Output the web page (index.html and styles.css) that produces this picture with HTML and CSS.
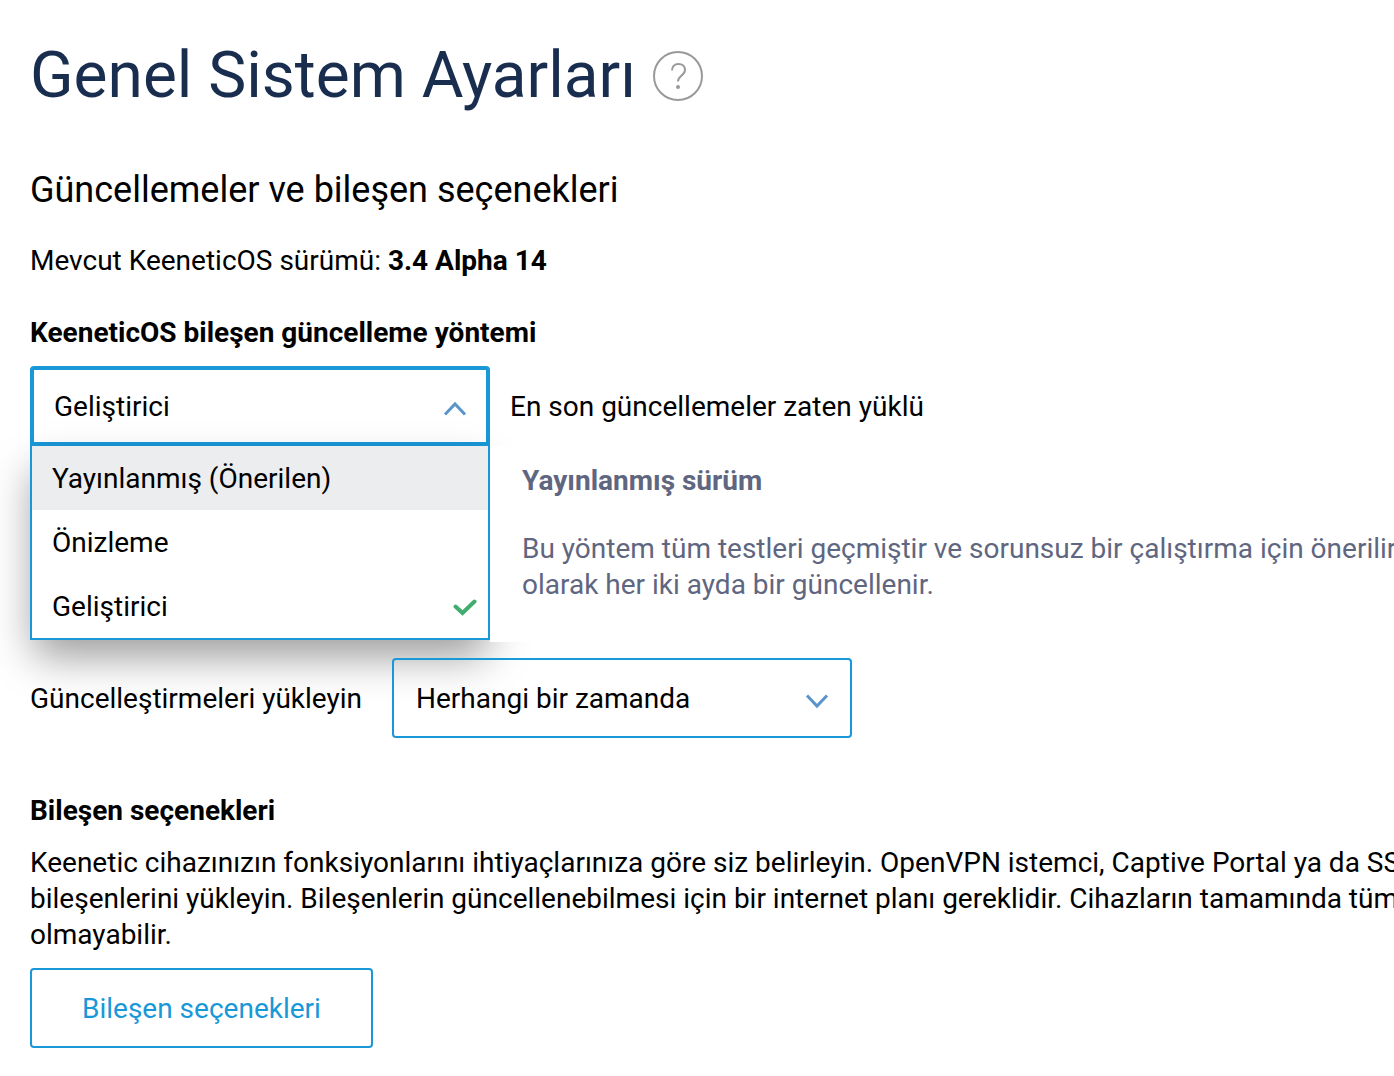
FILE: index.html
```html
<!DOCTYPE html>
<html lang="tr">
<head>
  <meta charset="UTF-8" />
  <meta name="viewport" content="width=device-width, initial-scale=1.0"/>
  <title>Genel Sistem Ayarları</title>
  <link rel="stylesheet" href="styles.css">
</head>
<body>
  <main class="page">
    <header class="page-header">
      <h1>Genel Sistem Ayarları</h1>
      <button type="button" class="help-btn">
        <svg width="50" height="50" viewBox="0 0 50 50" fill="none" stroke="#999" aria-hidden="true">
          <circle cx="25" cy="25" r="24" stroke-width="2"/>
          <path d="M19 19.500c0-4 2.600-6.500 6.500-6.500s6.500 2.300 6.500 6c0 5.500-7 5.500-7 11.500" stroke-width="2"/>
          <circle cx="25" cy="36" r="2" fill="#999" stroke="none"/>
        </svg>
      </button>
    </header>

    <section class="updates">
      <h2>Güncellemeler ve bileşen seçenekleri</h2>
      <p class="version">Mevcut KeeneticOS sürümü: <strong>3.4 Alpha 14</strong></p>

      <label class="field-title" for="channel">KeeneticOS bileşen güncelleme yöntemi</label>
      <div class="field-row">
        <div class="select open">
          <select id="channel">
            <option>Yayınlanmış (Önerilen)</option>
            <option>Önizleme</option>
            <option selected>Geliştirici</option>
          </select>
          <svg class="arrow" width="24" height="16" viewBox="0 0 24 16" aria-hidden="true">
            <path d="M2 13.500L12 3l10 10.500"/>
          </svg>
          <ul class="menu" role="listbox">
            <li class="menu-item hover" role="option">Yayınlanmış (Önerilen)</li>
            <li class="menu-item" role="option">Önizleme</li>
            <li class="menu-item" role="option" aria-selected="true">
              Geliştirici
              <svg class="check" width="24" height="18" viewBox="0 0 24 18" aria-hidden="true">
                <path d="M2.500 8.500l7 6.500L21.500 3.500"/>
              </svg>
            </li>
          </ul>
        </div>
        <span>En son güncellemeler zaten yüklü</span>
      </div>

      <!-- description of the hovered channel -->
      <div class="channel-info">
        <h3>Yayınlanmış sürüm</h3>
        <p>Bu yöntem tüm testleri geçmiştir ve sorunsuz bir çalıştırma için önerilir<br>olarak her iki ayda bir güncellenir.</p>
      </div>

      <div class="field-row schedule">
        <label for="install-time">Güncelleştirmeleri yükleyin</label>
        <div class="select">
          <select id="install-time">
            <option>Herhangi bir zamanda</option>
          </select>
          <svg class="arrow" width="24" height="16" viewBox="0 0 24 16" aria-hidden="true">
            <path d="M2 2.500L12 13l10-10.500"/>
          </svg>
        </div>
      </div>
    </section>

    <section class="components">
      <h3>Bileşen seçenekleri</h3>
      <p>Keenetic cihazınızın fonksiyonlarını ihtiyaçlarınıza göre siz belirleyin. OpenVPN istemci, Captive Portal ya da SS<br>bileşenlerini yükleyin. Bileşenlerin güncellenebilmesi için bir internet planı gereklidir. Cihazların tamamında tüm<br>olmayabilir.</p>
      <button type="button" class="btn">Bileşen seçenekleri</button>
    </section>
  </main>
</body>
</html>
```

FILE: styles.css
```css
* {
  margin: 0;
  padding: 0;
  box-sizing: border-box;
}

body {
  font-family: Roboto, sans-serif;
  font-size: 28px;
  line-height: 36px;
  color: #000;
  background: #fff;
  overflow-x: hidden;
}

.page {
  padding: 38px 0 28px 30px;
  white-space: nowrap;
}

.page-header {
  display: flex;
  align-items: center;
  gap: 17px;
  margin-bottom: 54px;
}

h1 {
  font-size: 64px;
  line-height: 76px;
  font-weight: 400;
  color: #192d4f;
}

h2 {
  font-size: 36px;
  line-height: 44px;
  font-weight: 400;
}

h3 {
  font-size: 28px;
  font-weight: 700;
}

.help-btn {
  border: none;
  background: none;
  cursor: pointer;
}

.help-btn svg {
  display: block;
}

.version {
  margin: 31px 0 36px;
}

.field-title {
  display: block;
  margin-bottom: 15px;
  font-weight: 700;
}

.field-row {
  display: flex;
  align-items: center;
  gap: 20px;
}

.field-row > span,
.field-row > label {
  padding-top: 2px;
}

.select {
  position: relative;
  width: 460px;
}

.select select {
  display: block;
  width: 100%;
  height: 80px;
  padding: 2px 60px 0 22px;
  border: 2px solid #1998d8;
  border-radius: 4px;
  appearance: none;
  background: none;
  font: inherit;
  color: inherit;
  outline: none;
}

.select.open select {
  padding-left: 20px;
  border-width: 4px;
  border-radius: 4px 4px 0 0;
}

.arrow {
  position: absolute;
  top: 35px;
  right: 23px;
  fill: none;
  stroke: #5b94cb;
  stroke-width: 3;
  pointer-events: none;
}

.menu {
  position: absolute;
  top: 100%;
  left: 0;
  width: 100%;
  list-style: none;
  background: #fff;
  border: 2px solid #1998d8;
  border-top: none;
  box-shadow: 0 20px 40px -4px rgba(0, 0, 0, 0.4);
}

.menu-item {
  display: flex;
  align-items: center;
  justify-content: space-between;
  padding: 15px 11px 13px 20px;
  cursor: pointer;
}

.menu-item.hover {
  background: #ecedef;
}

.check {
  fill: none;
  stroke: #41ad70;
  stroke-width: 4;
  stroke-linecap: round;
}

.channel-info {
  position: relative;
  margin-left: 460px;
  padding: 17px 32px 39px;
  background: #fff;
  color: #5f6680;
}

.channel-info h3 {
  margin-bottom: 32px;
}

.schedule {
  gap: 30px;
  margin-top: 16px;
}

.components {
  margin-top: 55px;
}

.components p {
  margin: 16px 0 15px;
}

.btn {
  height: 80px;
  padding: 2px 50px 0;
  border: 2px solid #1998d8;
  border-radius: 4px;
  background: #fff;
  font: inherit;
  color: #1998d8;
  cursor: pointer;
}
```
